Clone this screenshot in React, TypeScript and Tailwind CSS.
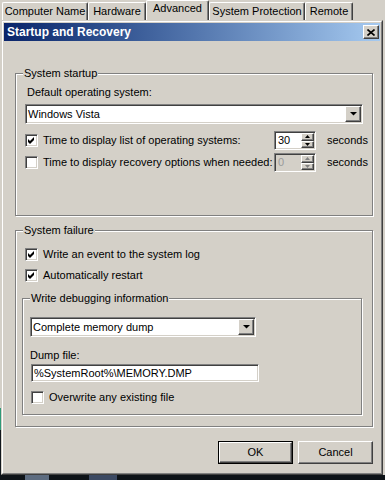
import type { ReactNode } from 'react';

const raised =
  'border border-t-white border-l-white border-r-[#404040] border-b-[#404040] shadow-[inset_-1px_-1px_0_#808080]';
const sunken =
  'border border-t-[#808080] border-l-[#808080] border-r-white border-b-white shadow-[inset_1px_1px_0_#404040,inset_-1px_-1px_0_#d4d0c8]';
const etched = 'border border-[#808080] shadow-[inset_1px_1px_0_#fff,1px_1px_0_#fff]';

const tabs = [
  { label: 'Computer Name', width: 'w-[86px]', selected: false },
  { label: 'Hardware', width: 'w-[58px]', selected: false },
  { label: 'Advanced', width: 'w-[63px]', selected: true },
  { label: 'System Protection', width: 'w-[96px]', selected: false },
  { label: 'Remote', width: 'w-[48px]', selected: false },
];

const CheckBox = ({ checked }: { checked?: boolean }) => (
  <span className={`flex h-[13px] w-[13px] shrink-0 items-center justify-center bg-white ${sunken}`}>
    {checked && (
      <svg width="7" height="7" viewBox="0 0 7 7">
        <path d="M0 2L2 4L6 0V3L2 7L0 5Z" fill="#000" />
      </svg>
    )}
  </span>
);

const Arrow = ({ up, disabled }: { up?: boolean; disabled?: boolean }) => (
  <svg width="5" height="3" viewBox="0 0 5 3">
    <path d={up ? 'M0 3H5L2.5 0Z' : 'M0 0H5L2.5 3Z'} fill={disabled ? '#808080' : '#000'} />
  </svg>
);

const Spinner = ({ value, disabled }: { value: string; disabled?: boolean }) => (
  <div
    className={`flex h-[19px] w-[42px] shrink-0 p-[1px] ${sunken} ${disabled ? 'bg-[#d4d0c8]' : 'bg-white'}`}
  >
    <span className={`flex-1 pl-[2px] leading-[15px] ${disabled ? 'text-[#9a9a9a]' : ''}`}>{value}</span>
    <div className="flex w-[13px] flex-col">
      <span className={`flex flex-1 items-center justify-center bg-[#d4d0c8] ${raised}`}>
        <Arrow up disabled={disabled} />
      </span>
      <span className={`flex flex-1 items-center justify-center bg-[#d4d0c8] ${raised}`}>
        <Arrow disabled={disabled} />
      </span>
    </div>
  </div>
);

const Select = ({ text, width }: { text: string; width: string }) => (
  <div className={`flex h-[20px] bg-white p-[1px] ${sunken} ${width}`}>
    <span className="flex-1 pl-[1px] leading-[16px]">{text}</span>
    <span className={`flex w-[16px] items-center justify-center bg-[#d4d0c8] ${raised}`}>
      <svg width="7" height="4" viewBox="0 0 7 4">
        <path d="M0 0H7L3.5 3.5Z" fill="#000" />
      </svg>
    </span>
  </div>
);

const Frame = ({ label, className, children }: { label: string; className: string; children: ReactNode }) => (
  <div className={`relative flex flex-col ${etched} ${className}`}>
    <span className="absolute -top-[7px] left-[7px] bg-[#d4d0c8] px-[1px] leading-[13px]">{label}</span>
    {children}
  </div>
);

const CheckRow = ({ label, checked, className }: { label: string; checked?: boolean; className: string }) => (
  <div className={`flex h-[17px] items-center ${className}`}>
    <CheckBox checked={checked} />
    <span className="ml-[5px] leading-[13px]">{label}</span>
  </div>
);

export default function App() {
  return (
    <div className="flex h-[480px] w-[385px] flex-col overflow-hidden bg-[#d4d0c8] font-['Liberation_Sans',Arial,sans-serif] text-[11px] text-black">
      {/* Property sheet tabs behind the dialog */}
      <div className="flex h-[20px] shrink-0 items-end pl-[2px]">
        {tabs.map((tab) => (
          <div
            key={tab.label}
            className={`${tab.width} rounded-t-[2px] border-t border-l border-r border-t-white border-l-white border-r-[#404040] text-center leading-[13px] shadow-[inset_-1px_0_0_#808080] ${
              tab.selected ? 'h-[20px] pt-[1px]' : 'h-[18px] pt-[2px]'
            }`}
          >
            {tab.label}
          </div>
        ))}
      </div>

      <div className="flex h-[455px] shrink-0">
        <div className="flex w-[1px] flex-col">
          <div className="h-[388px] bg-[#d4d0c8]" />
          <div className="h-[22px] bg-[#2f9a78]" />
          <div className="flex-1 bg-[#10161c]" />
        </div>

        {/* Dialog */}
        <div className="flex w-[382px] flex-col border border-t-[#d4d0c8] border-l-[#d4d0c8] border-r-[#404040] border-b-[#404040] bg-[#d4d0c8]">
          <div className="flex flex-1 flex-col border border-t-white border-l-white border-r-[#808080] border-b-[#808080] p-[1px]">
            <div className="flex h-[18px] items-center justify-between bg-linear-to-r from-[#0a246a] to-[#a6caf0] pl-[3px] pr-[1px]">
              <span className="text-[12px] font-bold leading-[18px] text-white">Startup and Recovery</span>
              <span className={`flex h-[14px] w-[16px] items-center justify-center bg-[#d4d0c8] ${raised}`}>
                <svg width="8" height="7" viewBox="0 0 8 7">
                  <path d="M0.5 0.5L7.5 6.5M7.5 0.5L0.5 6.5" stroke="#000" strokeWidth="1.6" />
                </svg>
              </span>
            </div>

            <div className="flex flex-col pl-[11px] pr-[7px]">
              <Frame label="System startup" className="mt-[32px] h-[143px] pl-[9px] pr-[9px] pt-[12px]">
                <span className="pl-[2px] leading-[13px]">Default operating system:</span>
                <Select text="Windows Vista" width="mt-[5px] w-full" />
                <div className="mt-[7px] flex h-[19px] items-center">
                  <CheckBox checked />
                  <span className="ml-[5px] w-[231px] shrink-0 leading-[13px]">
                    Time to display list of operating systems:
                  </span>
                  <Spinner value="30" />
                  <span className="ml-[11px] shrink-0 leading-[13px]">seconds</span>
                </div>
                <div className="mt-[3px] flex h-[19px] items-center">
                  <CheckBox />
                  <span className="ml-[5px] w-[231px] shrink-0 leading-[13px]">
                    Time to display recovery options when needed:
                  </span>
                  <Spinner value="0" disabled />
                  <span className="ml-[11px] shrink-0 leading-[13px]">seconds</span>
                </div>
              </Frame>

              <Frame label="System failure" className="mt-[14px] h-[197px] pl-[9px] pt-[15px]">
                <CheckRow label="Write an event to the system log" checked className="" />
                <CheckRow label="Automatically restart" checked className="mt-[4px]" />
                <Frame label="Write debugging information" className="-ml-[3px] mt-[14px] h-[117px] w-[340px] pl-[7px] pt-[18px]">
                  <Select text="Complete memory dump" width="w-[226px]" />
                  <span className="mt-[12px] leading-[13px]">Dump file:</span>
                  <div className={`ml-[1px] mt-[2px] h-[18px] w-[228px] bg-white p-[1px] pl-[2px] leading-[14px] ${sunken}`}>
                    {'%SystemRoot%\\MEMORY.DMP'}
                  </div>
                  <CheckRow label="Overwrite any existing file" className="ml-[1px] mt-[7px]" />
                </Frame>
              </Frame>

              <div className="mt-[14px] flex justify-end gap-[5px]">
                <div className="h-[23px] w-[75px] border border-black">
                  <div className={`flex h-full items-center justify-center ${raised}`}>OK</div>
                </div>
                <div className={`flex h-[23px] w-[75px] items-center justify-center ${raised}`}>Cancel</div>
              </div>
            </div>
          </div>
        </div>

        <div className="w-[2px] bg-[#d4d0c8]" />
      </div>

      {/* Desktop peeking out below */}
      <div className="flex flex-1 bg-[#0e1318]">
        <div className="ml-[25px] w-[24px] bg-[#5d6c80]" />
        <div className="ml-[40px] w-[28px] bg-[#3c4a63]" />
      </div>
    </div>
  );
}
